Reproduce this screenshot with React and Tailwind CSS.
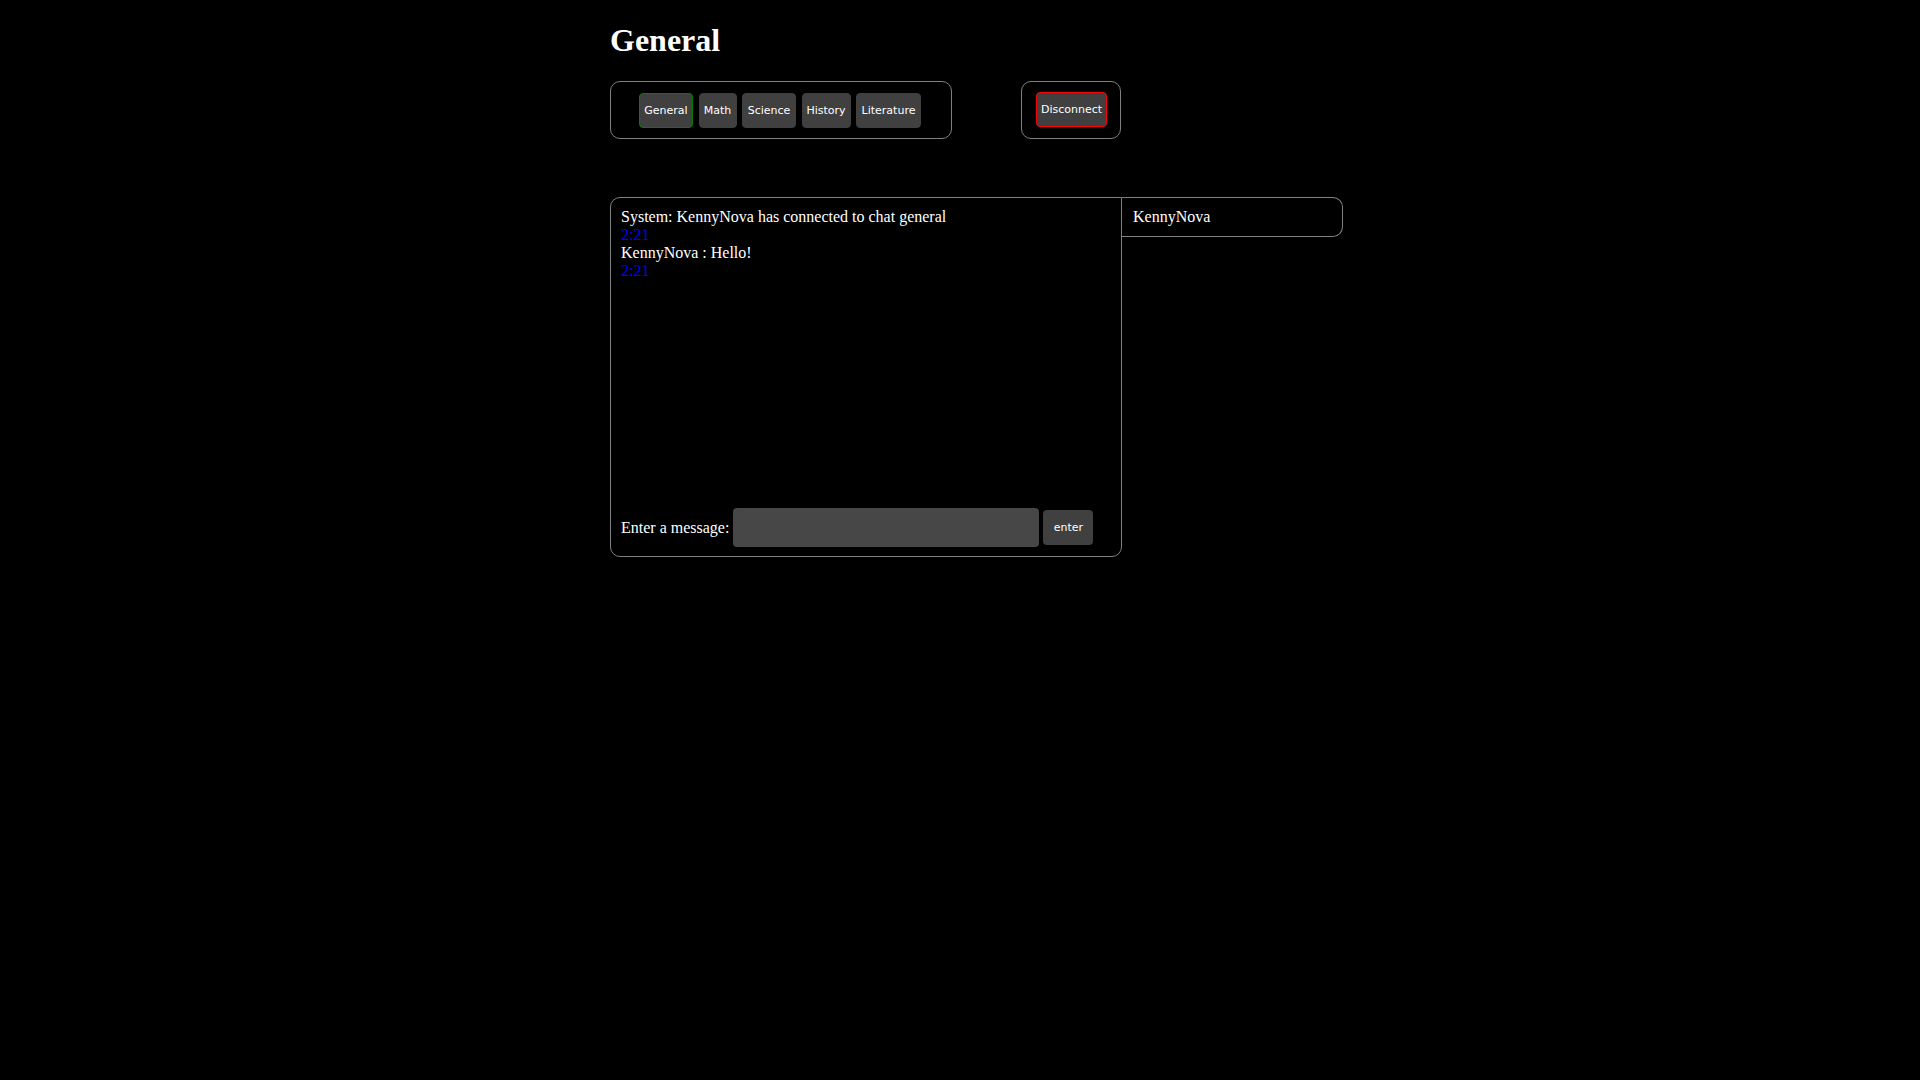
import React, { useState } from 'react';

const ROOMS = ['General', 'Math', 'Science', 'History', 'Literature'];
const WIDTHS = {
  General: 'w-[54px]',
  Math: 'w-[38px]',
  Science: 'w-[54px]',
  History: 'w-[49px]',
  Literature: 'w-[65px]',
};

export default function App() {
  const [room, setRoom] = useState('General');
  const [text, setText] = useState('');
  const [messages] = useState([
    { from: 'System:', body: 'KennyNova has connected to chat general', time: '2:21' },
    { from: 'KennyNova :', body: 'Hello!', time: '2:21' },
  ]);

  return (
    <div className="min-h-screen bg-black text-white font-['Liberation_Serif',serif]">
      <div className="w-[700px] mx-auto pt-[23px]">
        <h1 className="text-[32px] font-bold leading-[35px]">{room}</h1>

        {/* Room tabs + disconnect */}
        <div className="flex mt-[23px]">
          <div className="w-[342px] h-[58px] border border-[#808080] rounded-[10px] pl-[28px] pt-[11px] flex items-start gap-[5.5px]">
            {ROOMS.map((r) => (
              <button
                key={r}
                onClick={() => setRoom(r)}
                className={`${WIDTHS[r]} h-[35px] pt-[2px] rounded-[4px] bg-[#404040] text-white text-[11px] font-['DejaVu_Sans',sans-serif] border ${
                  r === room ? 'border-[#008000]' : 'border-[#404040]'
                }`}
              >
                {r}
              </button>
            ))}
          </div>
          <div className="ml-[69px] w-[100px] h-[58px] border border-[#808080] rounded-[10px] pl-[14px] pt-[10px]">
            <button className="w-[71px] h-[35px] pt-[1px] rounded-[4px] bg-[#404040] border border-[#ff0000] text-white text-[11px] font-['DejaVu_Sans',sans-serif]">
              Disconnect
            </button>
          </div>
        </div>

        {/* Chat area */}
        <div className="flex items-start mt-[58px]">
          <div className="w-[512px] h-[360px] border border-[#808080] rounded-tl-[10px] rounded-bl-[10px] rounded-br-[10px] flex flex-col px-[10px] pt-[10px] pb-[9px] shrink-0">
            <div className="flex-1 text-[16px] leading-[18px]">
              {messages.map((m, i) => (
                <div key={i}>
                  <div>{m.from} {m.body}</div>
                  <div className="text-[#0000ff]">{m.time}</div>
                </div>
              ))}
            </div>
            <div className="flex items-center text-[16px]">
              <span>Enter a message:</span>
              <input
                value={text}
                onChange={(e) => setText(e.target.value)}
                className="ml-[4px] w-[306px] h-[39px] rounded-[4px] bg-[#474747] outline-none text-white px-2"
              />
              <button className="ml-[4px] w-[50px] h-[35px] pt-[1px] rounded-[4px] bg-[#404040] text-white text-[11px] font-['DejaVu_Sans',sans-serif]">
                enter
              </button>
            </div>
          </div>
          <div className="w-[221px] shrink-0 border-t border-r border-b border-[#808080] rounded-tr-[10px] rounded-br-[10px] pl-[11px] py-[10px] text-[16px] leading-[18px]">
            KennyNova
          </div>
        </div>
      </div>
    </div>
  );
}
